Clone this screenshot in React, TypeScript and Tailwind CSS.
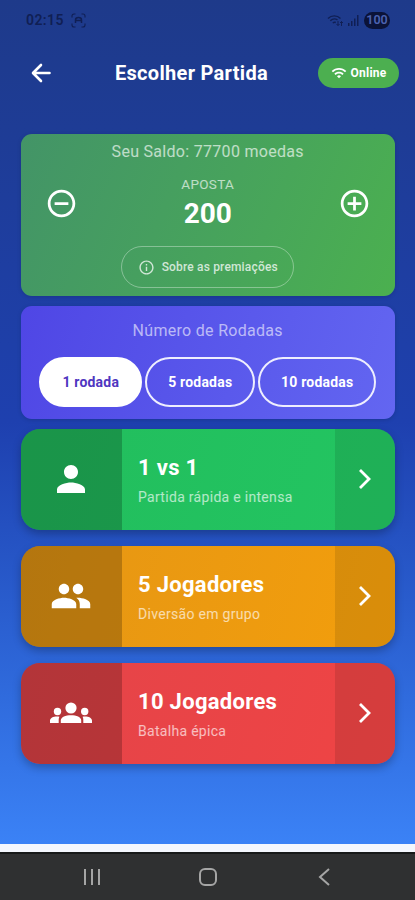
import React from 'react';
import {
  MdAddCircleOutline,
  MdInfoOutline,
  MdPeople,
  MdPerson,
  MdRemoveCircleOutline,
  MdWifi,
} from 'react-icons/md';

// Three people side by side, outer bodies cut straight next to the middle one
const GroupIcon: React.FC<{ size: number }> = ({ size }) => (
  <svg width={size} height={size} viewBox="0 0 42 42" fill="currentColor">
    <circle cx="21" cy="16" r="5.600" />
    <circle cx="7.500" cy="19.500" r="3.700" />
    <circle cx="34.700" cy="19.500" r="3.700" />
    <path d="M10.800 31v-2.500c0-3.500 4.800-5.300 10.200-5.300s10.200 1.800 10.200 5.300V31z" />
    <path d="M0 31v-2.200C0 26 3.200 24.500 7 24.500c.8 0 1.600.1 2.400.3-.5.900-.7 1.900-.7 3V31zM42 31v-2.200c0-2.800-3.200-4.300-7-4.300-.8 0-1.600.1-2.400.3.500.9.7 1.900.7 3V31z" />
  </svg>
);

const ROUNDS = [
  { label: '1 rodada', style: 'w-[103px] bg-white border-white text-[#4f36c0]' },
  { label: '5 rodadas', style: 'w-[110px] border-[#eeeefe] text-white' },
  { label: '10 rodadas', style: 'w-[118px] border-[#eeeefe] text-white' },
];

const MODES = [
  {
    title: '1 vs 1',
    subtitle: 'Partida rápida e intensa',
    icon: MdPerson,
    style: 'from-[#22bd5d] to-[#23c561]',
  },
  {
    title: '5 Jogadores',
    subtitle: 'Diversão em grupo',
    icon: MdPeople,
    style: 'from-[#e59614] to-[#f39e0b]',
  },
  {
    title: '10 Jogadores',
    subtitle: 'Batalha épica',
    icon: GroupIcon,
    style: 'from-[#e44449] to-[#ef4444]',
  },
];

const StatusBar: React.FC = () => (
  <div className="flex h-10 items-center justify-between pl-[26px] pr-[25px] text-[#101f54]">
    <div className="flex items-center gap-[7px]">
      <span className="text-[14px] font-semibold tracking-[0.4px] leading-none">02:15</span>
      <svg width="15" height="15" viewBox="0 0 15 15" fill="none" stroke="currentColor" strokeWidth="1.1">
        <path d="M1 4.500V3a2 2 0 0 1 2-2h1.500M10.500 1H12a2 2 0 0 1 2 2v1.500M14 10.500V12a2 2 0 0 1-2 2h-1.500M4.500 14H3a2 2 0 0 1-2-2v-1.500" />
        <path d="M4.500 10V7a3 2.500 0 0 1 6 0v3M4.500 7.500h6" strokeWidth="1.500" />
      </svg>
    </div>
    <div className="flex items-center gap-[5px]">
      <svg width="16" height="13" viewBox="0 0 16 13" fill="none" stroke="currentColor" strokeWidth="1.400">
        <path d="M1 4.500C4.500 1 10 1 13.500 4.500M3.300 6.800c2-2 5-2.300 7.200-1M5.800 9c1-.8 2-.9 3-.5" />
        <path d="M11 7v4.500M9.500 10l1.500 1.500L12.500 10M14.500 12V7.500M13 9l1.500-1.500L16 9" strokeWidth="1" />
      </svg>
      <svg width="11" height="11" viewBox="0 0 11 11" fill="currentColor">
        <path d="M0 8h1.500v3H0zM3 6h1.500v5H3zM6 3.500h1.500V11H6zM9 0h1.500v11H9z" />
      </svg>
      <span className="flex h-[17px] w-[26px] items-center justify-center rounded-full bg-[#0b1338] text-[12.500px] font-semibold leading-none text-[#4b62b0]">
        100
      </span>
    </div>
  </div>
);

const Header: React.FC = () => (
  <header className="flex h-[66px] items-center pl-[31px] pr-4 text-white">
    <button className="flex w-[84px]">
      <svg width="20" height="20" viewBox="0 0 20 20" fill="none" stroke="currentColor" strokeWidth="2.600" strokeLinecap="round" strokeLinejoin="round">
        <path d="M10 2 2 10l8 8M2.500 10h16" />
      </svg>
    </button>
    <h1 className="flex-1 whitespace-nowrap text-[20px] font-bold tracking-[0.3px]">Escolher Partida</h1>
    <div className="flex h-[30px] w-[81px] items-center justify-center gap-1 rounded-full bg-[#4caf50]">
      <MdWifi size={16} />
      <span className="text-[12px] font-bold tracking-[0.2px]">Online</span>
    </div>
  </header>
);

const BetCard: React.FC = () => (
  <section className="flex h-[162px] flex-col items-center rounded-[11px] bg-linear-113 from-[#439467] to-[#4bb04f] pt-2 shadow-[0_1px_4px_rgba(0,0,0,0.15)]">
    <p className="text-[16px] leading-5 tracking-[0.3px] text-white/65">Seu Saldo: 77700 moedas</p>
    <div className="flex w-full items-center justify-between px-6">
      <MdRemoveCircleOutline size={33} className="mt-[13px] text-white" />
      <div className="flex flex-col items-center pt-3">
        <span className="text-[13.500px] leading-5 tracking-[0.3px] text-white/65">APOSTA</span>
        <span className="mt-[2px] text-[28px] font-bold leading-9 text-white">200</span>
      </div>
      <MdAddCircleOutline size={33} className="mt-[13px] text-white" />
    </div>
    <button className="mt-[14px] flex h-[42px] w-[173px] items-center justify-center gap-[7px] rounded-full border border-white/35 text-white/75">
      <MdInfoOutline size={17} />
      <span className="text-[12px] font-medium tracking-[0.17px]">Sobre as premiações</span>
    </button>
  </section>
);

const RoundsCard: React.FC = () => (
  <section className="mt-[10px] flex h-[113px] flex-col items-center rounded-[11px] bg-linear-107 from-[#4f46e5] to-[#6366f1] pt-[13px] shadow-[0_1px_4px_rgba(0,0,0,0.15)]">
    <p className="text-[16px] leading-6 tracking-[0.3px] text-white/60">Número de Rodadas</p>
    <div className="mt-[14px] flex gap-[3px]">
      {ROUNDS.map((round) => (
        <button
          key={round.label}
          className={`h-[50px] rounded-full border-2 text-[14px] font-bold tracking-[0.2px] ${round.style}`}
        >
          {round.label}
        </button>
      ))}
    </div>
  </section>
);

const ModeCard: React.FC<{ mode: (typeof MODES)[number] }> = ({ mode }) => {
  const Icon = mode.icon;
  return (
    <button
      className={`flex h-[101px] w-full overflow-hidden rounded-[19px] bg-linear-105 text-left text-white shadow-[0_4px_8px_rgba(0,0,0,0.25)] ${mode.style}`}
    >
      <div className="flex h-full w-[101px] items-center justify-center bg-black/21 pr-px">
        <Icon size={42} />
      </div>
      <div className="flex h-full flex-1 flex-col justify-center pl-[16.5px] pt-1">
        <span className="text-[22px] font-bold leading-7 tracking-[0.3px]">{mode.title}</span>
        <span className="mt-[3px] text-[14px] leading-6 tracking-[0.3px] text-white/65">{mode.subtitle}</span>
      </div>
      <div className="flex h-full w-[60px] items-center justify-center bg-black/10">
        <svg width="14" height="22" viewBox="0 0 14 22" fill="none" stroke="currentColor" strokeWidth="2.800">
          <path d="m2 2 9 9-9 9" />
        </svg>
      </div>
    </button>
  );
};

const NavBar: React.FC = () => (
  <nav className="h-[48px] border-t-2 border-[#171919] bg-[#2f3031] text-[#a5a5a5]">
    <div className="flex h-[46px] items-center justify-between pl-[83px] pr-[85px]">
      <svg width="18" height="18" viewBox="0 0 18 18" stroke="currentColor" strokeWidth="2">
        <path d="M2 1v16M9 1v16M16 1v16" />
      </svg>
      <svg width="20" height="20" viewBox="0 0 20 20" fill="none" stroke="currentColor" strokeWidth="2" className="-ml-1">
        <rect x="2" y="2" width="16" height="16" rx="5" />
      </svg>
      <svg width="12" height="18" viewBox="0 0 12 18" fill="none" stroke="currentColor" strokeWidth="2">
        <path d="M11 1 2 9l9 8" />
      </svg>
    </div>
  </nav>
);

const App: React.FC = () => {
  return (
    <div className="flex h-[900px] w-[415px] flex-col overflow-hidden bg-[#f4f7fd] font-['Roboto',sans-serif]">
      <div className="h-[844px] bg-linear-to-b from-[#1e3a8a] via-[#1e40af] to-[#3b82f6]">
        <StatusBar />
        <Header />
        <main className="pl-[20.5px] pr-5 pt-7">
          <BetCard />
          <RoundsCard />
          <div className="mt-[9.5px] flex flex-col gap-4">
            {MODES.map((mode) => (
              <ModeCard key={mode.title} mode={mode} />
            ))}
          </div>
        </main>
      </div>
      <div className="h-2 shrink-0" />
      <NavBar />
    </div>
  );
};

export default App;
